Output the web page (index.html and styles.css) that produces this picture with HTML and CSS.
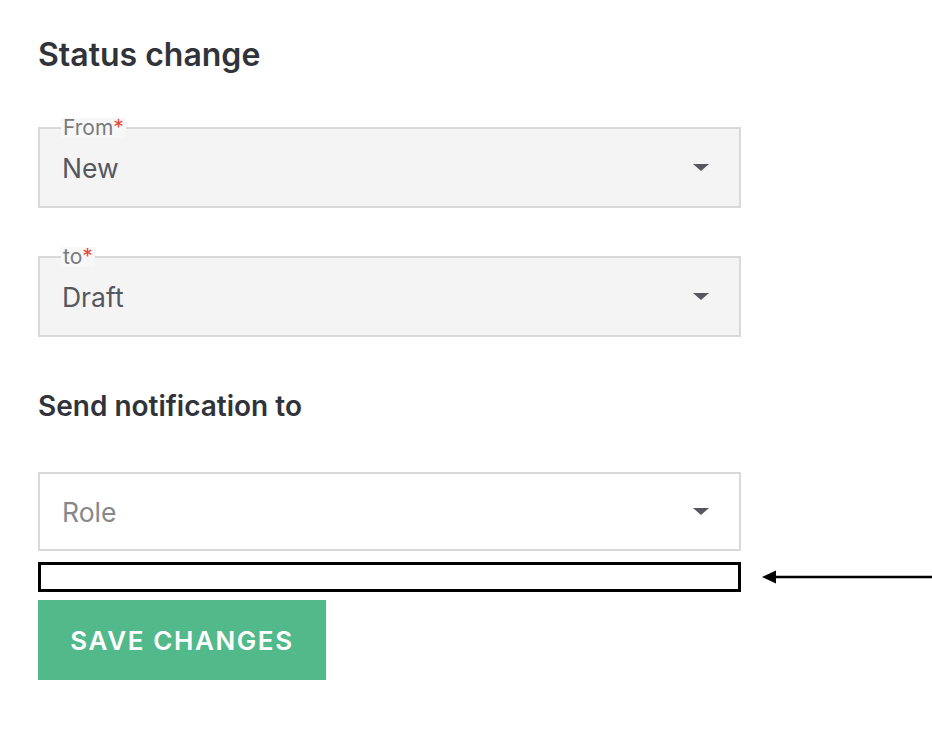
FILE: index.html
```html
<!DOCTYPE html>
<html>
<head>
<meta charset="utf-8">
<link rel="stylesheet" href="styles.css">
</head>
<body>
<div class="page">
  <h1 class="title">Status change</h1>
  <fieldset class="field filled">
    <legend class="legend">From<span class="req">*</span></legend>
    <div class="row"><span class="value">New</span><span class="caret"></span></div>
  </fieldset>
  <fieldset class="field filled">
    <legend class="legend">to<span class="req">*</span></legend>
    <div class="row"><span class="value">Draft</span><span class="caret"></span></div>
  </fieldset>
  <h2 class="subtitle">Send notification to</h2>
  <div class="field plain">
    <div class="row"><span class="value placeholder">Role</span><span class="caret"></span></div>
  </div>
  <div class="highlight-row">
    <div class="outline-box"></div>
    <svg class="pointer" width="170" height="16" viewBox="0 0 170 16">
      <line x1="10" y1="8" x2="170" y2="8" stroke="#000" stroke-width="2.5"/>
      <polygon points="0,8 14,1.5 14,14.5" fill="#000"/>
    </svg>
  </div>
  <button class="save">SAVE CHANGES</button>
</div>
</body>
</html>
```
FILE: styles.css
```css
html, body { margin: 0; padding: 0; background: #fff; }
body { font-family: Inter, "Noto Sans", sans-serif; }
.page { padding: 0 0 0 38px; width: 894px; }
.title { margin: 0; padding-top: 35px; font-size: 32px; font-weight: 600; color: #30333a; line-height: 40px; height: 40px; }
.field { box-sizing: border-box; width: 703px; border: 2px solid #d9d9d9; margin: 0; padding: 0 30px 0 22px; }
.filled { background: #f4f4f4; margin-top: 43px; min-inline-size: 0; padding-bottom: 9px; }
.filled + .filled { margin-top: 39px; }
.legend { font-size: 21px; color: #7a7a7e; padding: 0 2px; margin-left: -1px; line-height: 20px; background: #f7f7f7; }
.req { color: #e5483c; }
.row { display: flex; align-items: center; justify-content: space-between; height: 59px; }
.plain .row { height: 75px; }
.value { font-size: 26.5px; color: #55575d; }
.placeholder { color: #88888c; }
.caret { width: 0; height: 0; border-left: 8px solid transparent; border-right: 8px solid transparent; border-top: 7px solid #55575d; }
.subtitle { margin: 52px 0 0; font-size: 28px; font-weight: 600; color: #30333a; line-height: 34px; height: 34px; }
.plain { margin-top: 49px; background: #fff; height: 79px; }
.highlight-row { display: flex; align-items: center; margin-top: 11px; height: 30px; }
.outline-box { box-sizing: border-box; width: 704px; height: 30px; border: 3px solid #000; }
.pointer { margin-left: 21px; flex: none; }
.save { display: block; margin-top: 8px; width: 288px; height: 80px; background: #52b98b; border: 0; color: #fff; font-family: Inter, sans-serif; font-weight: 600; font-size: 26px; letter-spacing: 1.6px; padding: 0; }
```
